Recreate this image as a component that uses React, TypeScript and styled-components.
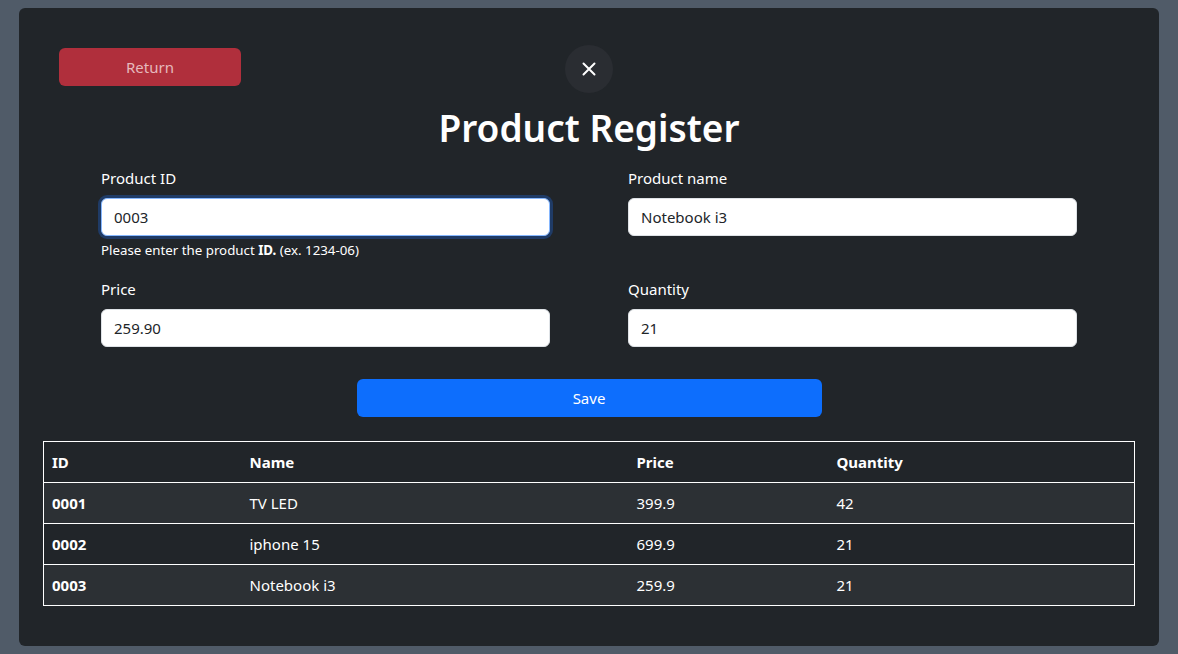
import React from "react";
import styled, { createGlobalStyle } from "styled-components";

const GlobalStyle = createGlobalStyle`
  html, body {
    margin: 0;
    padding: 0;
    background: #505b68;
    font-family: "Noto Sans", "Open Sans", sans-serif;
    color: #dee2e6;
  }
  * { box-sizing: border-box; }
`;

const Page = styled.div`
  padding: 8px 19px;
  min-height: 654px;
`;

const Card = styled.div`
  background: #212529;
  border-radius: 6px;
  padding: 37px 24px 40px;
`;

const Header = styled.div`
  display: grid;
  grid-template-columns: 1fr auto 1fr;
  align-items: center;
  padding: 0 16px;
`;

const ReturnButton = styled.button`
  justify-self: start;
  width: 182px;
  height: 38px;
  margin-top: -4px;
  border: none;
  border-radius: 6px;
  background: #b02f3c;
  color: #e5b9bd;
  font-family: inherit;
  font-size: 15px;
`;

const CloseButton = styled.button`
  width: 48px;
  height: 48px;
  border: none;
  border-radius: 50%;
  background: #2a2d32;
  display: flex;
  align-items: center;
  justify-content: center;
  padding: 0;
`;

const Title = styled.h1`
  margin: 11px 0 14px;
  text-align: center;
  font-size: 37px;
  font-weight: 600;
  line-height: 48px;
  color: #fff;
`;

const Form = styled.form`
  width: 976px;
  margin: 0 auto;
  display: grid;
  grid-template-columns: 449px 449px;
  column-gap: 78px;
  row-gap: 16px;
`;

const Field = styled.div`
  display: flex;
  flex-direction: column;
`;

const Label = styled.label`
  font-size: 15px;
  line-height: 24px;
  color: #fff;
  margin-bottom: 8px;
`;

const Input = styled.input<{ $focused?: boolean }>`
  height: 38px;
  padding: 6px 12px;
  border: 1px solid ${(p) => (p.$focused ? "#86b7fe" : "#dee2e6")};
  border-radius: 6px;
  background: #fff;
  color: #212529;
  font-family: inherit;
  font-size: 15px;
  outline: none;
  box-shadow: ${(p) => (p.$focused ? "0 0 0 3px #1f3b66" : "none")};
`;

const Help = styled.div`
  margin-top: 4px;
  font-size: 13.3px;
  line-height: 21px;
  color: #fff;

  b { font-weight: 700; }
`;

const SaveRow = styled.div`
  display: flex;
  justify-content: center;
  margin: 32px 0 24px;
`;

const SaveButton = styled.button`
  width: 465px;
  height: 38px;
  border: none;
  border-radius: 6px;
  background: #0d6efd;
  color: #fff;
  font-family: inherit;
  font-size: 15px;
`;

const Table = styled.table`
  width: 100%;
  border-collapse: collapse;
  border: 1px solid #fff;
  font-size: 15px;
  color: #fff;
`;

const Row = styled.tr<{ $striped?: boolean }>`
  background: ${(p) => (p.$striped ? "#2c3034" : "#212529")};
  border-bottom: 1px solid #fff;
`;

const Th = styled.th<{ $w?: number }>`
  text-align: left;
  font-weight: 700;
  padding: 8px;
  line-height: 24px;
  width: ${(p) => (p.$w ? `${p.$w}px` : "auto")};
`;

const Td = styled.td<{ $bold?: boolean }>`
  padding: 8px;
  line-height: 24px;
  font-weight: ${(p) => (p.$bold ? 700 : 400)};
`;

const XIcon = () => (
  <svg width="16" height="16" viewBox="0 0 16 16">
    <path d="M2.5 2.5l11 11M13.5 2.5l-11 11" stroke="#fff" strokeWidth="2" strokeLinecap="round" />
  </svg>
);

const products = [
  { id: "0001", name: "TV LED", price: "399.9", qty: "42" },
  { id: "0002", name: "iphone 15", price: "699.9", qty: "21" },
  { id: "0003", name: "Notebook i3", price: "259.9", qty: "21" },
];

export default function App() {
  return (
    <>
      <GlobalStyle />
      <Page>
        <Card>
          <Header>
            <ReturnButton>Return</ReturnButton>
            <CloseButton aria-label="Close">
              <XIcon />
            </CloseButton>
            <div />
          </Header>
          <Title>Product Register</Title>
          <Form>
            <Field>
              <Label>Product ID</Label>
              <Input $focused defaultValue="0003" />
              <Help>
                Please enter the product <b>ID.</b> (ex. 1234-06)
              </Help>
            </Field>
            <Field>
              <Label>Product name</Label>
              <Input defaultValue="Notebook i3" />
            </Field>
            <Field>
              <Label>Price</Label>
              <Input defaultValue="259.90" />
            </Field>
            <Field>
              <Label>Quantity</Label>
              <Input defaultValue="21" />
            </Field>
          </Form>
          <SaveRow>
            <SaveButton>Save</SaveButton>
          </SaveRow>
          <Table>
            <thead>
              <Row>
                <Th $w={198}>ID</Th>
                <Th $w={387}>Name</Th>
                <Th $w={200}>Price</Th>
                <Th>Quantity</Th>
              </Row>
            </thead>
            <tbody>
              {products.map((p, i) => (
                <Row key={p.id} $striped={i % 2 === 0}>
                  <Td $bold>{p.id}</Td>
                  <Td>{p.name}</Td>
                  <Td>{p.price}</Td>
                  <Td>{p.qty}</Td>
                </Row>
              ))}
            </tbody>
          </Table>
        </Card>
      </Page>
    </>
  );
}
